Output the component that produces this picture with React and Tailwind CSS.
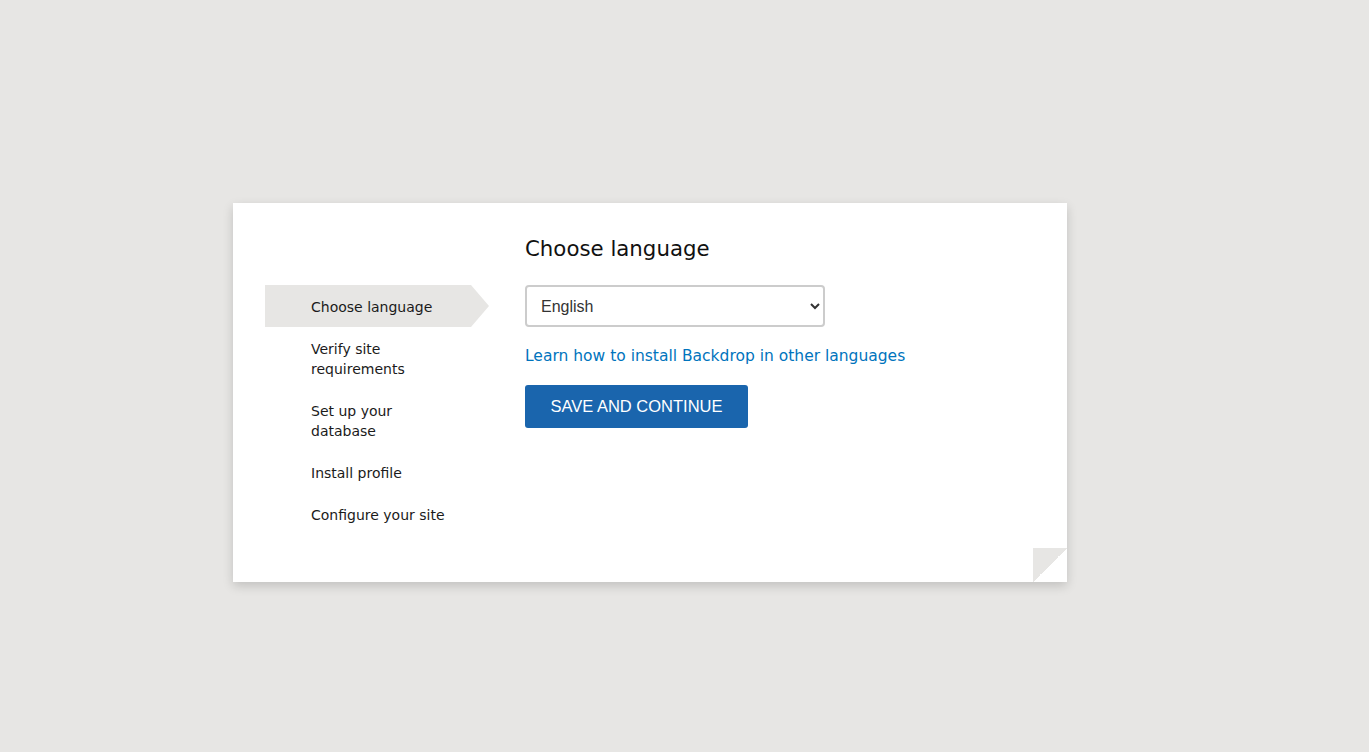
import React from "react";

const steps = [
  { label: "Choose language", active: true },
  { label: "Verify site requirements" },
  { label: "Set up your database" },
  { label: "Install profile" },
  { label: "Configure your site" },
];

const App = () => {
  return (
    <div className="min-h-screen bg-[#e7e6e4] pt-[203px] pl-[233px]">
      {/* Installer card */}
      <div className="relative w-[834px] bg-white pt-8 pl-8 pr-8 pb-[47px] shadow-[0_4px_10px_rgba(0,0,0,0.16)]">
        <div className="flex">
          {/* Steps sidebar */}
          <ol className="w-[260px] shrink-0 pt-[50px] font-['DejaVu_Sans',sans-serif] text-[14px] leading-[20px] text-[#1b1b1b]">
            {steps.map((step) => (
              <li
                key={step.label}
                className={
                  step.active
                    ? "w-[224px] pt-[12px] pb-[10px] pl-[46px] pr-[38px] bg-[#e7e6e4] [clip-path:polygon(0_0,206px_0,224px_50%,206px_100%,0_100%)]"
                    : "w-[224px] pt-[12px] pb-[10px] pl-[46px] pr-[38px]"
                }
              >
                <span className="block w-[140px]">{step.label}</span>
              </li>
            ))}
          </ol>

          {/* Main form */}
          <div className="flex-1">
            <h1 className="pt-[1px] font-['DejaVu_Sans',sans-serif] text-[21.3px] leading-[26px] text-[#111]">
              Choose language
            </h1>
            <select
              defaultValue="en"
              className="mt-[23px] block h-[42px] w-[300px] rounded border-2 border-[#cccccc] bg-white pl-[10px] pr-2 font-['Liberation_Sans',Arial,sans-serif] text-[16px] text-[#333]"
            >
              <option value="en">English</option>
            </select>
            <a
              href="#"
              className="mt-[19px] block font-['DejaVu_Sans',sans-serif] text-[15.5px] leading-[20px] text-[#0074bd]"
            >
              Learn how to install Backdrop in other languages
            </a>
            <button className="mt-[19px] h-[43px] w-[223px] rounded-[3px] bg-[#1a65ad] font-['Liberation_Sans',Arial,sans-serif] text-[16.5px] uppercase text-white">
              Save and continue
            </button>
          </div>
        </div>

        {/* Folded corner */}
        <div className="absolute bottom-0 right-0 h-[34px] w-[34px] bg-[linear-gradient(to_bottom_right,#e7e6e4_50%,#ffffff_50%)]" />
      </div>
    </div>
  );
};

export default App;
